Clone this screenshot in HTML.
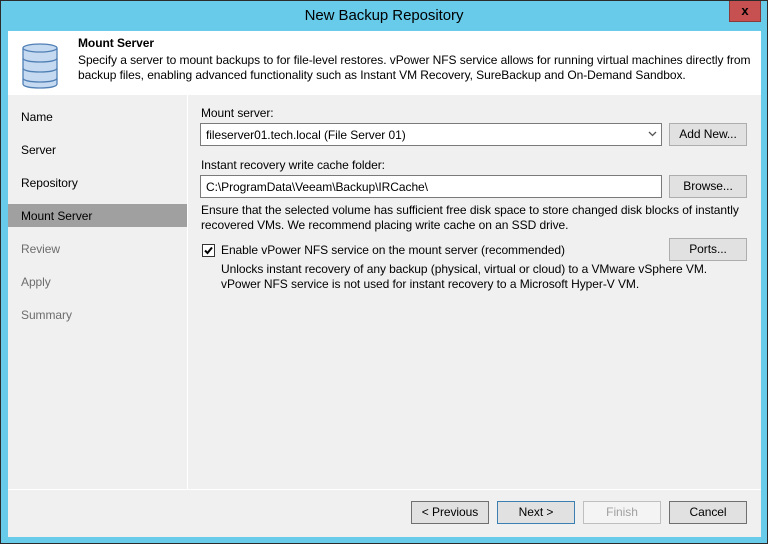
<!DOCTYPE html>
<html><head><style>
*{margin:0;padding:0;box-sizing:border-box}
body{width:768px;height:544px;background:#68cbea;font-family:"Liberation Sans",sans-serif;font-size:12px;letter-spacing:-0.06px;color:#000;position:relative;overflow:hidden}
.frame{position:absolute;left:0;top:0;width:768px;height:544px;border:1px solid #2b2b2b}
.title{position:absolute;left:0;top:7px;width:768px;text-align:center;font-size:15px;color:#000}
.close{position:absolute;left:729px;top:1px;width:32px;height:21px;background:#c75050;border:1px solid #8a3a3a;border-top:none;color:#000;font-weight:bold;font-size:13px;text-align:center;line-height:19px}
.header{position:absolute;left:8px;top:31px;width:753px;height:64px;background:#fff}
.body{position:absolute;left:8px;top:95px;width:753px;height:442px;background:#f0f0f0}
.a{position:absolute;white-space:nowrap}
.nav{position:absolute;left:21px;font-size:12px}
.sel{position:absolute;left:8px;top:204px;width:179px;height:23px;background:#a0a0a0}
.vsep{position:absolute;left:187px;top:95px;width:1px;height:394px;background:#fff}
.hsep{position:absolute;left:8px;top:489px;width:753px;height:1px;background:#fff}
.input{position:absolute;background:#fff;border:1px solid #7a7a7a;height:23px;padding:4px 0 0 5px;font-size:12px}
.btn{position:absolute;background:#e1e1e1;border:1px solid #adadad;height:23px;text-align:center;line-height:21px;font-size:12px}
.bb{border-color:#707070}
</style></head><body>
<div class="frame"></div>
<div class="title">New Backup Repository</div>
<div class="close">x</div>
<div class="header">
<svg style="position:absolute;left:12px;top:9px" width="40" height="50" viewBox="0 0 40 50">
<g fill="#c5daf0" stroke="#4f7fb5" stroke-width="1.3">
<path d="M3 38v6c0 2.5 7 4 17 4s17-1.5 17-4v-6"/>
<path d="M3 28v10c0 2.5 7 4 17 4s17-1.5 17-4V28"/>
<path d="M3 18v10c0 2.5 7 4 17 4s17-1.5 17-4V18"/>
<path d="M3 8v10c0 2.5 7 4 17 4s17-1.5 17-4V8"/>
<ellipse cx="20" cy="8" rx="17" ry="4"/>
</g></svg>
<div class="a" style="left:70px;top:5px;font-weight:bold">Mount Server</div>
<div class="a" style="left:70px;top:22px;line-height:15px">Specify a server to mount backups to for file-level restores. vPower NFS service allows for running virtual machines directly from<br>backup files, enabling advanced functionality such as Instant VM Recovery, SureBackup and On-Demand Sandbox.</div>
</div>
<div class="body"></div>
<div class="sel"></div>
<div class="vsep"></div>
<div class="hsep"></div>
<div class="nav" style="top:110px">Name</div>
<div class="nav" style="top:143px">Server</div>
<div class="nav" style="top:176px">Repository</div>
<div class="nav" style="top:209px">Mount Server</div>
<div class="nav" style="top:242px;color:#6d6d6d">Review</div>
<div class="nav" style="top:275px;color:#6d6d6d">Apply</div>
<div class="nav" style="top:308px;color:#6d6d6d">Summary</div>

<div class="a" style="left:201px;top:106px">Mount server:</div>
<div class="input" style="left:200px;top:123px;width:462px">fileserver01.tech.local (File Server 01)
<svg style="position:absolute;right:4px;top:7px" width="9" height="6"><path d="M1 1l3.5 3.5L8 1" fill="none" stroke="#555" stroke-width="1.3"/></svg></div>
<div class="btn" style="left:669px;top:123px;width:78px">Add New...</div>
<div class="a" style="left:201px;top:158px">Instant recovery write cache folder:</div>
<div class="input" style="left:200px;top:175px;width:462px">C:\ProgramData\Veeam\Backup\IRCache\</div>
<div class="btn" style="left:669px;top:175px;width:78px">Browse...</div>
<div class="a" style="left:201px;top:203px;line-height:15px">Ensure that the selected volume has sufficient free disk space to store changed disk blocks of instantly<br>recovered VMs. We recommend placing write cache on an SSD drive.</div>
<div class="a" style="left:202px;top:244px;width:13px;height:13px;background:#fff;border:1px solid #333">
<svg width="11" height="11" style="position:absolute;left:0;top:0"><path d="M2 5.5l2.5 2.5L9 2.5" fill="none" stroke="#000" stroke-width="2"/></svg></div>
<div class="a" style="left:221px;top:243px">Enable vPower NFS service on the mount server (recommended)</div>
<div class="btn" style="left:669px;top:238px;width:78px">Ports...</div>
<div class="a" style="left:221px;top:262px;line-height:15px">Unlocks instant recovery of any backup (physical, virtual or cloud) to a VMware vSphere VM.<br>vPower NFS service is not used for instant recovery to a Microsoft Hyper-V VM.</div>

<div class="btn bb" style="left:411px;top:501px;width:78px">&lt; Previous</div>
<div class="btn" style="left:497px;top:501px;width:78px;border-color:#3c7fb1">Next &gt;</div>
<div class="btn" style="left:583px;top:501px;width:78px;background:#f4f4f4;border-color:#bfbfbf;color:#a0a0a0">Finish</div>
<div class="btn bb" style="left:669px;top:501px;width:78px">Cancel</div>
</body></html>
